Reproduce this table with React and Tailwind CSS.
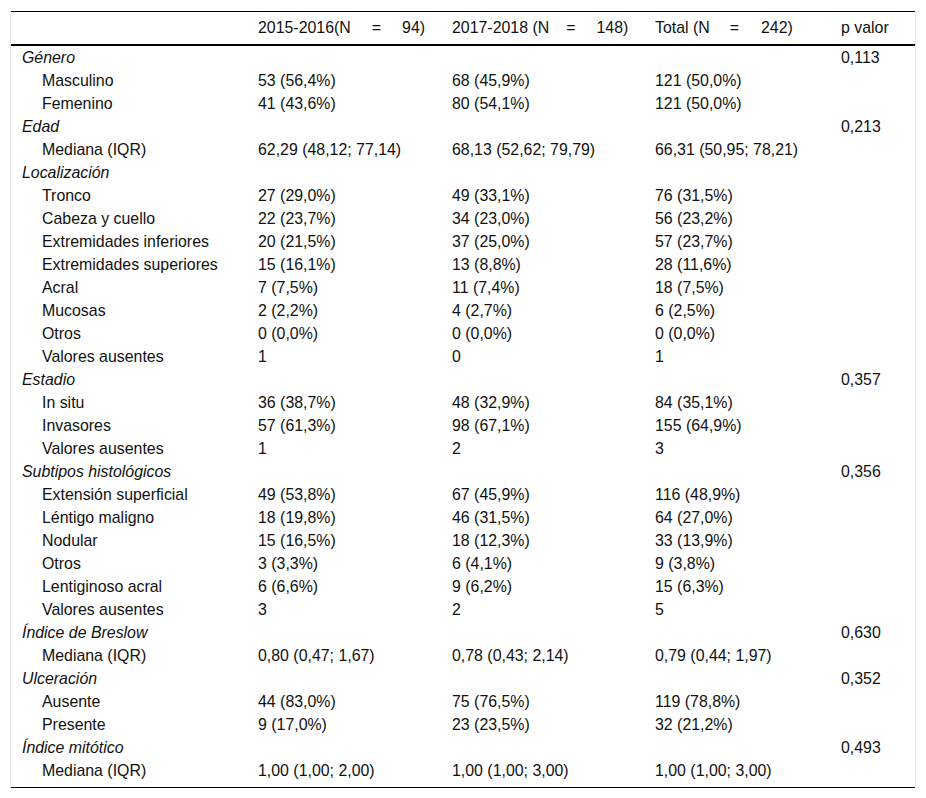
import React from "react";

const rows = [
  { g: "Género", p: "0,113" },
  { l: "Masculino", a: "53 (56,4%)", b: "68 (45,9%)", c: "121 (50,0%)" },
  { l: "Femenino", a: "41 (43,6%)", b: "80 (54,1%)", c: "121 (50,0%)" },
  { g: "Edad", p: "0,213" },
  { l: "Mediana (IQR)", a: "62,29 (48,12; 77,14)", b: "68,13 (52,62; 79,79)", c: "66,31 (50,95; 78,21)" },
  { g: "Localización" },
  { l: "Tronco", a: "27 (29,0%)", b: "49 (33,1%)", c: "76 (31,5%)" },
  { l: "Cabeza y cuello", a: "22 (23,7%)", b: "34 (23,0%)", c: "56 (23,2%)" },
  { l: "Extremidades inferiores", a: "20 (21,5%)", b: "37 (25,0%)", c: "57 (23,7%)" },
  { l: "Extremidades superiores", a: "15 (16,1%)", b: "13 (8,8%)", c: "28 (11,6%)" },
  { l: "Acral", a: "7 (7,5%)", b: "11 (7,4%)", c: "18 (7,5%)" },
  { l: "Mucosas", a: "2 (2,2%)", b: "4 (2,7%)", c: "6 (2,5%)" },
  { l: "Otros", a: "0 (0,0%)", b: "0 (0,0%)", c: "0 (0,0%)" },
  { l: "Valores ausentes", a: "1", b: "0", c: "1" },
  { g: "Estadio", p: "0,357" },
  { l: "In situ", a: "36 (38,7%)", b: "48 (32,9%)", c: "84 (35,1%)" },
  { l: "Invasores", a: "57 (61,3%)", b: "98 (67,1%)", c: "155 (64,9%)" },
  { l: "Valores ausentes", a: "1", b: "2", c: "3" },
  { g: "Subtipos histológicos", p: "0,356" },
  { l: "Extensión superficial", a: "49 (53,8%)", b: "67 (45,9%)", c: "116 (48,9%)" },
  { l: "Léntigo maligno", a: "18 (19,8%)", b: "46 (31,5%)", c: "64 (27,0%)" },
  { l: "Nodular", a: "15 (16,5%)", b: "18 (12,3%)", c: "33 (13,9%)" },
  { l: "Otros", a: "3 (3,3%)", b: "6 (4,1%)", c: "9 (3,8%)" },
  { l: "Lentiginoso acral", a: "6 (6,6%)", b: "9 (6,2%)", c: "15 (6,3%)" },
  { l: "Valores ausentes", a: "3", b: "2", c: "5" },
  { g: "Índice de Breslow", p: "0,630" },
  { l: "Mediana (IQR)", a: "0,80 (0,47; 1,67)", b: "0,78 (0,43; 2,14)", c: "0,79 (0,44; 1,97)" },
  { g: "Ulceración", p: "0,352" },
  { l: "Ausente", a: "44 (83,0%)", b: "75 (76,5%)", c: "119 (78,8%)" },
  { l: "Presente", a: "9 (17,0%)", b: "23 (23,5%)", c: "32 (21,2%)" },
  { g: "Índice mitótico", p: "0,493" },
  { l: "Mediana (IQR)", a: "1,00 (1,00; 2,00)", b: "1,00 (1,00; 3,00)", c: "1,00 (1,00; 3,00)" },
];

const grid = "grid grid-cols-[247px_194px_203px_186px_1fr] items-center";

export default function App() {
  return (
    <div className="bg-white w-[926px] h-[798px] pt-[11px]" style={{ fontFamily: '"Liberation Sans", Arial, sans-serif' }}>
      <div className="ml-[10px] w-[906px] border-l border-r border-[#e6e6e6] text-[15.9px] text-[#111] leading-none">
        <div className="border-t border-black">
          <div className={`${grid} h-[34px] pb-[1px] border-b-2 border-black`}>
            <div />
            <div className="whitespace-nowrap">
              2015-2016(N<span className="ml-[21px]">=</span><span className="ml-[21px]">94)</span>
            </div>
            <div className="whitespace-nowrap">
              2017-2018 (N<span className="ml-[17px]">=</span><span className="ml-[21px]">148)</span>
            </div>
            <div className="whitespace-nowrap">
              Total (N<span className="ml-[20px]">=</span><span className="ml-[22px]">242)</span>
            </div>
            <div>p valor</div>
          </div>
          <div className="pb-[5px] border-b border-black">
            {rows.map((r, i) =>
              r.g ? (
                <div key={i} className={`${grid} h-[23px]`}>
                  <div className="pl-[11px] italic whitespace-nowrap">{r.g}</div>
                  <div />
                  <div />
                  <div />
                  <div>{r.p || ""}</div>
                </div>
              ) : (
                <div key={i} className={`${grid} h-[23px]`}>
                  <div className="pl-[31px] whitespace-nowrap">{r.l}</div>
                  <div className="whitespace-nowrap">{r.a}</div>
                  <div className="whitespace-nowrap">{r.b}</div>
                  <div className="whitespace-nowrap">{r.c}</div>
                  <div />
                </div>
              )
            )}
          </div>
        </div>
      </div>
    </div>
  );
}
